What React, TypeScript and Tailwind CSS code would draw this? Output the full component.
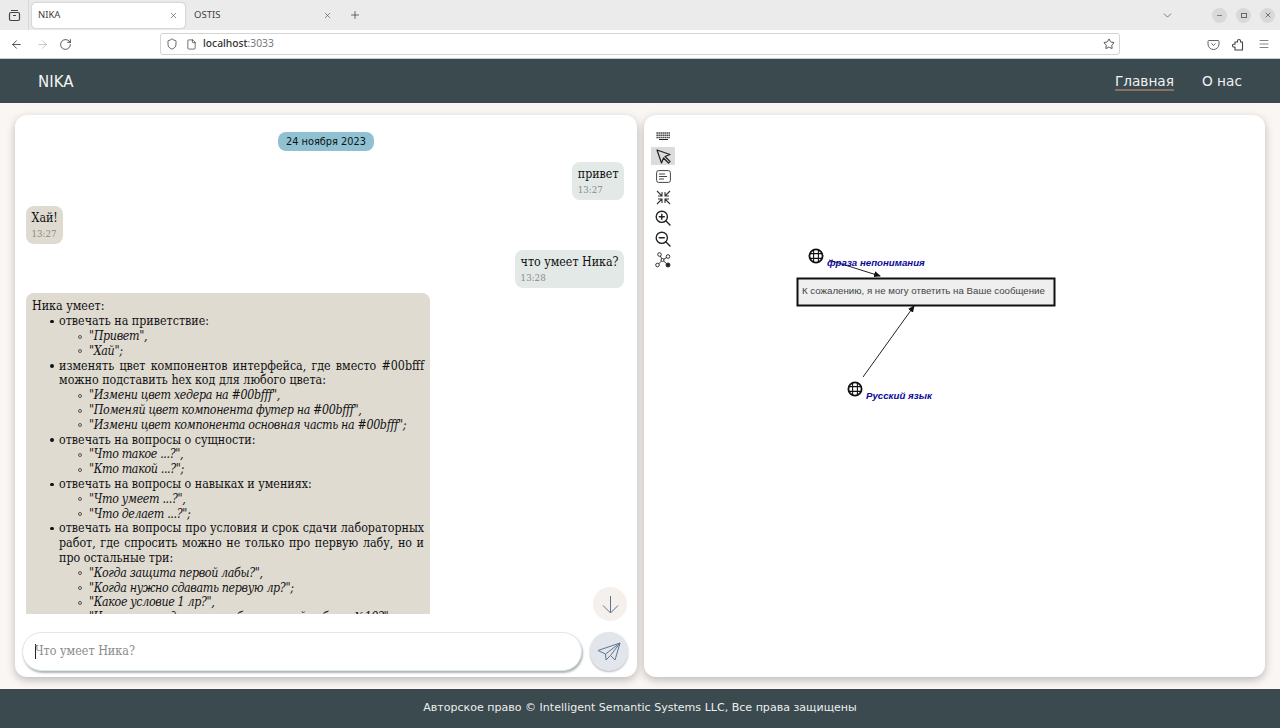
import React from "react";
import { ArrowLeft, ArrowRight, RotateCw, Shield, File, Star, Menu, Plus, X, ChevronDown, Minus } from "lucide-react";

const sans = "font-['DejaVu_Sans',sans-serif]";
const ui = "font-['Noto_Sans',sans-serif]";

function Bubble({ me, text, time }: { me?: boolean; text: string; time: string }) {
  return (
    <div className={`flex ${me ? "justify-end" : "justify-start"}`}>
      <div className={`rounded-lg px-[5.5px] pt-[5px] pb-[4px] ${me ? "bg-[#e3e9e6]" : "bg-[#dfdbd1]"}`}>
        <div className="text-[12.3px] leading-[15px] text-[#111]">{text}</div>
        <div className="text-[9.7px] leading-[13px] mt-[1px] text-[#8a8a86]">{time}</div>
      </div>
    </div>
  );
}

const Sub = ({ items }: { items: string[] }) => (
  <ul className="list-none pl-[30px]">
    {items.map((t, i) => (
      <li key={i} className="relative before:absolute before:left-[-11px] before:top-[5.5px] before:w-[4px] before:h-[4px] before:rounded-full before:border before:border-[#555]">
        <i className="tracking-[-0.35px]">{t}</i>
      </li>
    ))}
  </ul>
);

const Item = ({ text, items }: { text: string; items: string[] }) => (
  <li className="relative before:absolute before:left-[-9px] before:top-[5.5px] before:w-[3.5px] before:h-[3.5px] before:rounded-full before:bg-[#111]">
    {text}
    <Sub items={items} />
  </li>
);

function Globe({ cx, cy }: { cx: number; cy: number }) {
  return (
    <g stroke="#111" fill="none">
      <circle cx={cx} cy={cy} r="6.6" strokeWidth="1.8" />
      <path d={`M${cx - 6.6} ${cy - 2.4}H${cx + 6.6}M${cx - 6.6} ${cy + 2.4}H${cx + 6.6}M${cx - 2.4} ${cy - 6.6}V${cy + 6.6}M${cx + 2.4} ${cy - 6.6}V${cy + 6.6}`} strokeWidth="1.1" />
    </g>
  );
}

const Tool = ({ active, children }: { active?: boolean; children: React.ReactNode }) => (
  <div className="h-[20.75px] flex items-center justify-center">
    <div className={`w-full h-[18px] flex items-center justify-center ${active ? "bg-[#dcdcdc]" : ""}`}>{children}</div>
  </div>
);

export default function App() {
  return (
    <div className="w-[1280px] h-[728px] overflow-hidden flex flex-col bg-[#faf6f4]">
      {/* Browser tabs */}
      <div className={`h-[30px] shrink-0 bg-[#ebebeb] flex items-center text-[#3f3f3f] ${ui}`}>
        <div className="w-[29px] h-full flex items-center justify-center border-r border-[#d8d8d8]">
          <svg width="13" height="13" viewBox="0 0 13 13" fill="none" stroke="#444" strokeWidth="1.2">
            <rect x="1.5" y="3.5" width="10" height="8" rx="1.5" />
            <path d="M3 1.5h7M5 6.5h3" />
          </svg>
        </div>
        <div className="ml-[3px] w-[153px] h-[25px] bg-white rounded-[4px] shadow-[0_0_2px_rgba(0,0,0,0.3)] flex items-center justify-between px-[6px] text-[9.5px] pt-[1px]">
          <span>NIKA</span>
          <X size={9} strokeWidth={1.5} className="mr-[1px]" />
        </div>
        <div className="w-[155px] h-[25px] flex items-center justify-between pl-[9px] pr-[8px] text-[9.5px] pt-[1px]">
          <span>OSTIS</span>
          <X size={9} strokeWidth={1.5} />
        </div>
        <Plus size={12} strokeWidth={1.5} className="ml-[9px]" />
        <div className="flex-1" />
        <ChevronDown size={13} strokeWidth={1.2} className="mr-[38px]" />
        <div className="flex gap-[9px] mr-[5px]">
          <span className="w-[15px] h-[15px] rounded-full bg-[#d9d9d9] flex items-center justify-center"><Minus size={7} /></span>
          <span className="w-[15px] h-[15px] rounded-full bg-[#d9d9d9] flex items-center justify-center"><span className="w-[6px] h-[5px] border border-[#666]" /></span>
          <span className="w-[15px] h-[15px] rounded-full bg-[#d9d9d9] flex items-center justify-center"><X size={8} strokeWidth={2} /></span>
        </div>
      </div>
      {/* Browser toolbar */}
      <div className={`h-[29px] shrink-0 bg-white border-b border-[#c9cccc] flex items-center text-[#333] ${ui}`}>
        <ArrowLeft size={13} strokeWidth={1.5} className="ml-[10px]" />
        <ArrowRight size={13} strokeWidth={1.2} className="ml-[13px] text-[#aaa]" />
        <RotateCw size={13} strokeWidth={1.5} className="ml-[10px]" />
        <div className="ml-[88px] w-[960px] h-[22px] rounded-[3px] border border-[#d4d4d4] flex items-center pl-[5px] pr-[4px]">
          <Shield size={12} strokeWidth={1.5} />
          <File size={11} strokeWidth={1.5} className="ml-[8px]" />
          <span className="ml-[6px] text-[10.3px] font-medium">localhost<span className="text-[#777] font-normal">:3033</span></span>
          <div className="flex-1" />
          <Star size={12} strokeWidth={1.7} />
        </div>
        <div className="flex-1" />
        <svg width="13" height="13" viewBox="0 0 13 13" fill="none" stroke="#666" strokeWidth="1" className="mr-[12px]">
          <path d="M2 2.5h9a1 1 0 0 1 1 1V6a5.5 5.5 0 0 1-11 0V3.5a1 1 0 0 1 1-1zM4.5 5.5l2 2 2-2" />
        </svg>
        <svg width="13" height="13" viewBox="0 0 13 13" fill="none" stroke="#444" strokeWidth="1.1" strokeLinejoin="round" className="mr-[13px]">
          <path d="M3 12V9H1.8a1.4 1.4 0 0 1 0-2.8H3V4H5.5V3a1.5 1.5 0 0 1 3 0V4H10.5V12Z" />
        </svg>
        <Menu size={12} strokeWidth={1.2} className="mr-[10px]" />
      </div>
      {/* App header */}
      <header className={`h-[44px] shrink-0 bg-[#3b4a4f] flex items-center pl-[38px] pr-[38px] pt-[2px] text-[#f2f2f2] ${sans}`}>
        <span className="text-[15px]">NIKA</span>
        <div className="flex-1" />
        <span className="text-[13.7px] border-b-2 border-[#8c6f68] leading-[16px]">Главная</span>
        <span className="text-[13.7px] ml-[28px] leading-[16px] mb-[2px]">О нас</span>
      </header>
      {/* Main */}
      <main className="flex-1 min-h-0 flex gap-[7px] pl-[15px] pr-[15px] pt-[12px] pb-[12px]">
        {/* Chat */}
        <section className="w-[622px] bg-white rounded-xl shadow-[0_3px_8px_rgba(0,0,0,0.25)] relative flex flex-col font-['DejaVu_Serif_Condensed','DejaVu_Serif',serif]">
          <div className="h-[499px] overflow-hidden pl-[11px] pr-[13px] pt-[17px]">
            <div className="flex justify-center pl-[2px]">
              <div className={`bg-[#8fc1d2] rounded-lg text-[9.8px] leading-[19px] px-[8px] text-[#111] ${sans}`}>24 ноября 2023</div>
            </div>
            <div className="mt-[11px]"><Bubble me text="привет" time="13:27" /></div>
            <div className="mt-[6px]"><Bubble text="Хай!" time="13:27" /></div>
            <div className="mt-[6px]"><Bubble me text="что умеет Ника?" time="13:28" /></div>
            <div className="mt-[5px] w-[404px] bg-[#dfdbd1] rounded-lg px-[6px] pt-[6px] text-[12.35px] leading-[14.8px] text-[#111]">
              Ника умеет:
              <ul className="list-none pl-[27px] mt-[0.5px] text-justify">
                <Item text="отвечать на приветствие:" items={['"Привет",', '"Хай";']} />
                <Item text="изменять цвет компонентов интерфейса, где вместо #00bfff можно подставить hex код для любого цвета:" items={['"Измени цвет хедера на #00bfff",', '"Поменяй цвет компонента футер на #00bfff",', '"Измени цвет компонента основная часть на #00bfff";']} />
                <Item text="отвечать на вопросы о сущности:" items={['"Что такое ...?",', '"Кто такой ...?";']} />
                <Item text="отвечать на вопросы о навыках и умениях:" items={['"Что умеет ...?",', '"Что делает ...?";']} />
                <Item text="отвечать на вопросы про условия и срок сдачи лабораторных работ, где спросить можно не только про первую лабу, но и про остальные три:" items={['"Когда защита первой лабы?",', '"Когда нужно сдавать первую лр?";', '"Какое условие 1 лр?",', '"Что нужно сделать в лабораторной работе №10?"']} />
              </ul>
            </div>
          </div>
          <div className="absolute right-[10px] top-[472px] w-[34px] h-[34px] rounded-full bg-[#f6f0ec] flex items-center justify-center">
            <svg width="17" height="19" viewBox="0 0 17 19" fill="none" stroke="#5f7390" strokeWidth="1">
              <path d="M8.5 1V18M1 10.5L8.5 18L16 10.5" />
            </svg>
          </div>
          <div className="flex-1 flex items-start pl-[7px] pr-[8px] pt-[18px] gap-[8px]">
            <div className="w-[560px] h-[39px] rounded-full bg-white border border-[#dde8e8] shadow-[1px_2px_2px_rgba(100,110,110,0.5)] flex items-center pl-[12px] text-[12.4px] text-[#8a8a8a]">
              <span className="w-px h-[15px] bg-[#222] -mr-[1px]" />Что умеет Ника?
            </div>
            <div className="w-[38px] h-[39px] rounded-full bg-[#e2e6ec] shadow-[0_1px_2px_rgba(100,110,110,0.5)] flex items-center justify-center">
              <svg width="24" height="20" viewBox="0 0 24 20" fill="none" stroke="#5f7390" strokeWidth="1" strokeLinejoin="round">
                <path d="M23 1L1 8.5L8.5 12L9 18L13.5 13.5L18 18ZM23 1L8.5 12M13.5 13.5L23 1" />
              </svg>
            </div>
          </div>
        </section>
        {/* Graph */}
        <section className="w-[621px] bg-white rounded-xl shadow-[0_3px_8px_rgba(0,0,0,0.25)] relative overflow-hidden">
          <div className="absolute left-[7px] top-[10px] flex flex-col w-[24px] text-[#333]">
            <Tool>
              <svg width="15" height="8" viewBox="0 0 15 8" fill="none" stroke="#222" className="mt-[2px]">
                <path d="M0.5 1H14.5M0.5 3.2H14.5M0.5 5.4H14.5" strokeWidth="1.5" strokeDasharray="1.3 0.7" />
                <path d="M3 7.5H12" strokeWidth="1.2" />
              </svg>
            </Tool>
            <Tool active>
              <svg width="15" height="15" viewBox="0 0 15 15" fill="none" stroke="#222" strokeWidth="1.2" strokeLinejoin="round">
                <path d="M1 1L14 5.5L9 7.5L14 12.5L12.5 14L7.5 9L5.5 14Z" />
              </svg>
            </Tool>
            <Tool>
              <svg width="15" height="13" viewBox="0 0 15 13" fill="none" stroke="#444" strokeWidth="1"><rect x="0.6" y="0.6" width="13.8" height="11.8" rx="2" /><path d="M3 4h6M3 6.5h8M3 9h5" /></svg>
            </Tool>
            <Tool>
              <svg width="15" height="15" viewBox="0 0 15 15" fill="none" stroke="#333" strokeWidth="1.1">
                <path d="M1 1L6 6M2 6H6V2M14 1L9 6M13 6H9V2M1 14L6 9M2 9H6V13M14 14L9 9M13 9H9V13" />
              </svg>
            </Tool>
            <Tool>
              <svg width="16" height="16" viewBox="0 0 16 16" fill="none" stroke="#222" strokeWidth="1.4" strokeLinecap="round">
                <circle cx="6.8" cy="6.8" r="5.6" /><path d="M11 11L15 15M4.3 6.8H9.3M6.8 4.3V9.3" />
              </svg>
            </Tool>
            <Tool>
              <svg width="16" height="16" viewBox="0 0 16 16" fill="none" stroke="#222" strokeWidth="1.4" strokeLinecap="round">
                <circle cx="6.8" cy="6.8" r="5.6" /><path d="M11 11L15 15M4.3 6.8H9.3" />
              </svg>
            </Tool>
            <Tool>
              <svg width="16" height="16" viewBox="0 0 16 16" fill="none" stroke="#333" strokeWidth="1">
                <path d="M5 3.5L7.5 8L3 12.5M7.5 8L12.5 5M7.5 8L12.5 12.5" />
                <circle cx="4.5" cy="2.5" r="1.8" fill="#fff" />
                <circle cx="2.5" cy="13" r="1.8" fill="#fff" />
                <circle cx="13" cy="4.5" r="1.8" fill="#fff" />
                <circle cx="7.5" cy="8" r="1.5" fill="#fff" />
                <circle cx="13" cy="13" r="2" fill="#222" />
              </svg>
            </Tool>
          </div>
          <svg width="621" height="562" className="block">
            <defs>
              <marker id="a" markerWidth="7" markerHeight="6" refX="6" refY="3" orient="auto"><path d="M0 0L7 3L0 6z" fill="#111" /></marker>
            </defs>
            <Globe cx={172} cy={141} />
            <Globe cx={211} cy={274} />
            <path d="M185 145L236 161" stroke="#222" strokeWidth="1" markerEnd="url(#a)" />
            <path d="M219 262L270 191" stroke="#222" strokeWidth="1" markerEnd="url(#a)" />
            <rect x="153.5" y="163.5" width="257" height="27" fill="#efefef" stroke="#111" strokeWidth="2" />
            <text x="158" y="179" fontSize="9.7" fill="#444" fontFamily="'Liberation Sans',sans-serif">К сожалению, я не могу ответить на Ваше сообщение</text>
            <text x="183" y="151" fontSize="9.7" fill="#0a0a9a" fontWeight="700" fontStyle="italic" fontFamily="'Liberation Sans',sans-serif">фраза непонимания</text>
            <text x="222" y="284" fontSize="9.7" fill="#0a0a9a" fontWeight="700" fontStyle="italic" fontFamily="'Liberation Sans',sans-serif">Русский язык</text>
          </svg>
        </section>
      </main>
      <footer className={`h-[39px] shrink-0 bg-[#3b4a4f] flex items-center justify-center text-[#eee] text-[11.05px] ${sans}`}>
        Авторское право © Intelligent Semantic Systems LLC, Все права защищены
      </footer>
    </div>
  );
}
